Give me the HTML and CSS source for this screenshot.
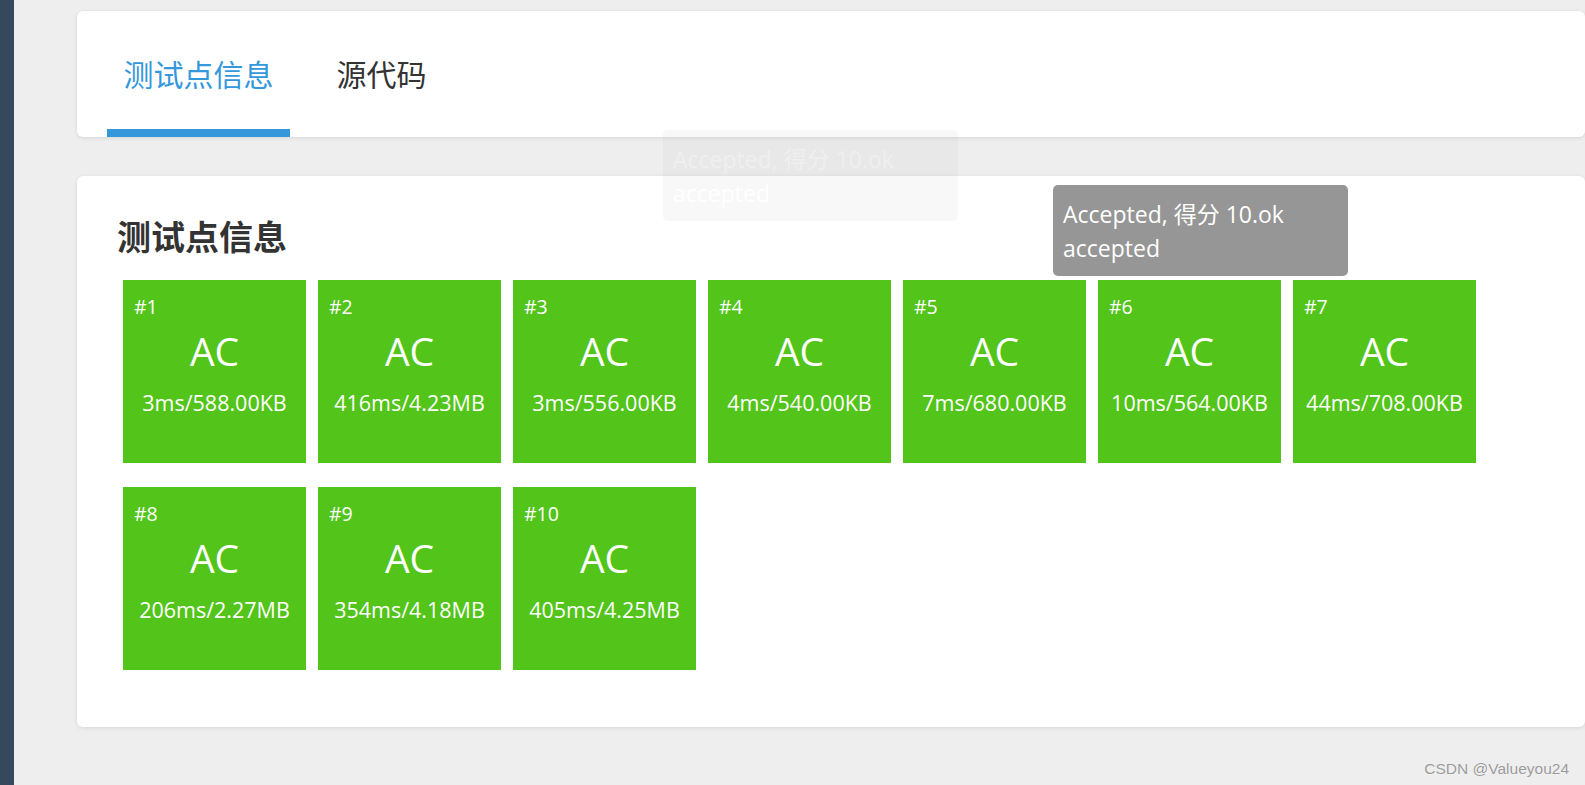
FILE: index.html
```html
<!DOCTYPE html>
<html lang="zh">
<head>
<meta charset="utf-8">
<title>测试点信息</title>
<link rel="stylesheet" href="styles.css">
</head>
<body>
<div class="layout">
  <aside class="sidebar"></aside>
  <main class="content">
    <section class="card tabs-card">
      <nav class="tabs">
        <div class="tab active">测试点信息</div>
        <div class="tab">源代码</div>
      </nav>
    </section>
    <section class="card cases-card">
      <h2 class="title">测试点信息</h2>
      <div class="tiles">
        <div class="tile"><span class="num">#1</span><span class="status">AC</span><span class="usage">3ms/588.00KB</span></div>
        <div class="tile"><span class="num">#2</span><span class="status">AC</span><span class="usage">416ms/4.23MB</span></div>
        <div class="tile"><span class="num">#3</span><span class="status">AC</span><span class="usage">3ms/556.00KB</span></div>
        <div class="tile"><span class="num">#4</span><span class="status">AC</span><span class="usage">4ms/540.00KB</span></div>
        <div class="tile"><span class="num">#5</span><span class="status">AC</span><span class="usage">7ms/680.00KB</span></div>
        <div class="tile"><span class="num">#6</span><span class="status">AC</span><span class="usage">10ms/564.00KB</span></div>
        <div class="tile"><span class="num">#7</span><span class="status">AC</span><span class="usage">44ms/708.00KB</span></div>
        <div class="tile"><span class="num">#8</span><span class="status">AC</span><span class="usage">206ms/2.27MB</span></div>
        <div class="tile"><span class="num">#9</span><span class="status">AC</span><span class="usage">354ms/4.18MB</span></div>
        <div class="tile"><span class="num">#10</span><span class="status">AC</span><span class="usage">405ms/4.25MB</span></div>
      </div>
    </section>
  </main>
</div>
<div class="tooltip tooltip-fading">Accepted, 得分 10.ok<br>accepted</div>
<div class="tooltip tooltip-shown">Accepted, 得分 10.ok<br>accepted</div>
<div class="watermark">CSDN @Valueyou24</div>
</body>
</html>
```

FILE: styles.css
```css
* { box-sizing: border-box; }
html, body {
  margin: 0;
  height: 100%;
  background: #eeeeee;
  font-family: "Open Sans", "Noto Sans", "Noto Sans CJK SC", sans-serif;
  overflow: hidden;
}
.layout {
  display: flex;
  min-height: 100%;
}
.sidebar {
  width: 14px;
  flex: 0 0 14px;
  background: #34495e;
}
.content {
  flex: 1;
  padding: 11px 0 0 63px;
  display: flex;
  flex-direction: column;
  gap: 39px;
}
.card {
  background: #fff;
  border-radius: 6px;
  box-shadow: 0 1px 4px rgba(0,0,0,0.1);
}
.tabs-card {
  height: 126px;
  overflow: hidden;
}
.tabs {
  display: flex;
  gap: 30px;
  padding-left: 30px;
  height: 100%;
}
.tab {
  padding: 5px 16.5px 0;
  display: flex;
  align-items: center;
  font-family: "Noto Sans CJK SC", sans-serif;
  font-size: 30px;
  color: #333;
  border-bottom: 8px solid transparent;
}
.tab.active {
  color: #3498db;
  border-bottom-color: #3498db;
}
.cases-card {
  padding: 40px 0 57px 46px;
}
.title {
  margin: 0 0 24px -6px;
  font-family: "Noto Sans CJK SC", sans-serif;
  font-size: 34px;
  font-weight: 700;
  color: #333;
  line-height: 40px;
}
.tiles {
  display: flex;
  flex-wrap: wrap;
  column-gap: 12px;
  row-gap: 24px;
  max-width: 1360px;
}
.tile {
  width: 183px;
  height: 183px;
  background: #52c41a;
  color: #fff;
  display: flex;
  flex-direction: column;
  align-items: center;
}
.num {
  align-self: flex-start;
  font-size: 19.5px;
  margin: 13px 0 0 11px;
}
.status {
  font-size: 39px;
  margin-top: 4px;
}
.usage {
  font-size: 21.5px;
  margin-top: 11px;
}
.tooltip {
  position: absolute;
  width: 295px;
  height: 91px;
  padding: 12px 10px 0;
  background: #969696;
  color: #fff;
  border-radius: 5px;
  font-size: 23px;
  line-height: 34px;
}
.tooltip-shown {
  left: 1053px;
  top: 185px;
}
.tooltip-fading {
  left: 663px;
  top: 130px;
  opacity: 0.06;
}
.watermark {
  position: absolute;
  right: 16px;
  bottom: 7px;
  font-family: "Liberation Sans", Arial, sans-serif;
  font-size: 15.5px;
  color: #9a9a9a;
  text-shadow: 0 0 1px #fff;
}
```
